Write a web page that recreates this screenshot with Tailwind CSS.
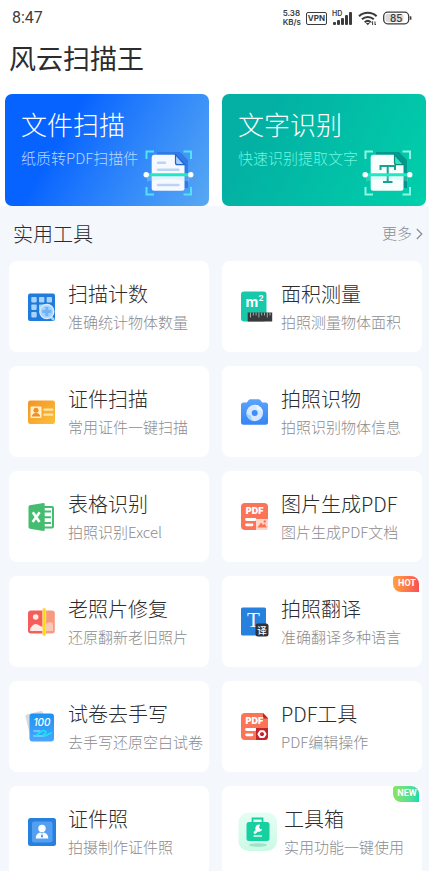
<!DOCTYPE html>
<html lang="zh-CN">
<head>
    <meta charset="UTF-8">
    <meta name="viewport" content="width=device-width, initial-scale=1.0">
    <title>风云扫描王</title>
    <script src="https://cdn.jsdelivr.net/npm/@tailwindcss/browser@4"></script>
</head>
<body class="h-screen flex flex-col overflow-hidden bg-[#f4f7fb] text-[#2c2c2e] font-light font-['Noto_Sans_CJK_SC',sans-serif]">

<header class="bg-white">
    <!-- Status bar -->
    <div class="flex h-9 items-center justify-between pl-3 pr-[17px] text-[#3c3c3c]">
        <span class="font-['Roboto',sans-serif] text-base font-normal">8:47</span>
        <div class="flex items-center gap-[5px]">
            <div class="font-['Inter',sans-serif] text-[8px] leading-[9px] font-semibold">
                <div>5.38</div>
                <div>KB/s</div>
            </div>
            <span class="flex h-[13px] w-[21px] items-center justify-center rounded-[2px] border border-[#3c3c3c] font-['Inter',sans-serif] text-[8px] font-bold">VPN</span>
            <svg class="h-4 w-[21px]" viewBox="0 0 21 16" fill="#3c3c3c">
                <text x="0" y="6" font-family="Inter, sans-serif" font-size="7" font-weight="600">HD</text>
                <rect x="1" y="12" width="3" height="3" rx="1"/>
                <rect x="5" y="10" width="3" height="5" rx="1"/>
                <rect x="9" y="8" width="3" height="7" rx="1"/>
                <rect x="13" y="5" width="3" height="10" rx="1"/>
                <rect x="17" y="2" width="3" height="13" rx="1"/>
            </svg>
            <svg class="h-4 w-5" viewBox="0 0 20 16" fill="none" stroke="#3c3c3c" stroke-width="2.1">
                <path d="M1 6.200c5-4.600 12.600-4.600 17.600 0M3.900 9.300c3.500-3.100 8.400-3.100 11.900 0M6.700 12.200c2-1.700 4.300-1.700 6 0"/>
                <path d="M7.800 13l2 2.200 2-2.200z" fill="#3c3c3c" stroke="none"/>
                <path d="M14.600 15v-3.500l-1 1M17 11.500v3.500l1-1" stroke-width="1"/>
            </svg>
            <svg class="h-4 w-[29px]" viewBox="0 0 29 16">
                <rect x="0.700" y="2.200" width="25" height="11.600" rx="4" fill="#fff" stroke="#3c3c3c" stroke-width="1.300"/>
                <rect x="2.500" y="4" width="18" height="8" rx="2" fill="#dadada"/>
                <path d="M27.600 6.300v3.400" stroke="#3c3c3c" stroke-width="1.600"/>
                <text x="13.200" y="11.600" text-anchor="middle" font-family="Inter, sans-serif" font-size="10" font-weight="500" fill="#3c3c3c">85</text>
            </svg>
        </div>
    </div>

    <h1 class="flex h-11 items-center pl-[9px] text-[27px] font-normal">风云扫描王</h1>

    <!-- Main banners -->
    <nav class="grid grid-cols-2 gap-[13px] pt-3.5 pl-[5px] pr-[3px]">
        <a href="#" class="relative h-28 rounded-[7px] bg-linear-120 from-[#0763ff] from-30% to-[#58a8f2] pt-3 pl-4 text-white">
            <h2 class="text-[26px] leading-9">文件扫描</h2>
            <p class="mt-1 text-[15px] leading-6 whitespace-nowrap text-[#b9d8ff]">纸质转PDF扫描件</p>
            <svg class="absolute right-3.5 bottom-1.5 size-13" viewBox="0 0 52 52" fill="none">
                <path d="M14 4h23l8 8v28H14z" fill="#2f7ae6"/>
                <path d="M11 6.700h21.500l9 10v23.500q0 2.500-2.500 2.500H11.200q-2.500 0-2.500-2.500v-31q0-2.500 2.300-2.500z" fill="#f6faff"/>
                <path d="M32.500 6.700l9 10h-7q-2 0-2-2z" fill="#a9cdfa" stroke="#1e63d0" stroke-width="1.200"/>
                <path d="M15 14.700h7M15 21.700h20.500M15 37h20.500" stroke="#bcd3f8" stroke-width="2.400" stroke-linecap="round"/>
                <path d="M4 27.500h42v6q-21-5-42 0z" fill="#b9e2ff" opacity=".3"/>
                <path d="M3.500 11V3.500H11M40.500 3.500H48V11M3.500 39v7.500H11M40.500 46.500H48V39" stroke="#4fe3f5" stroke-width="2"/>
                <path d="M4 26.700h43" stroke="#20e8c5" stroke-width="3"/>
                <circle cx="3.200" cy="26.700" r="2.700" fill="#fff"/>
                <circle cx="47.800" cy="26.700" r="2.700" fill="#fff"/>
            </svg>
        </a>
        <a href="#" class="relative h-28 rounded-[7px] bg-linear-120 from-[#03b0a3] from-20% to-[#01d0ab] pt-3 pl-4 text-white">
            <h2 class="text-[26px] leading-9">文字识别</h2>
            <p class="mt-1 text-[15px] leading-6 whitespace-nowrap text-[#6df5de]">快速识别提取文字</p>
            <svg class="absolute right-3 bottom-1.5 size-13" viewBox="0 0 52 52" fill="none">
                <path d="M14 4h23l8 8v28H14z" fill="#02998c"/>
                <path d="M11 6.700h21.500l9 10v23.500q0 2.500-2.500 2.500H11.200q-2.500 0-2.500-2.500v-31q0-2.500 2.300-2.500z" fill="#f6fffd"/>
                <path d="M32.500 6.700l9 10h-7q-2 0-2-2z" fill="#35dfc2" stroke="#078d80" stroke-width="1.200"/>
                <path d="M18.500 22v-4H33v4M25.700 18v16M21 34h9.500" stroke="#16a193" stroke-width="2"/>
                <path d="M4 27.500h42v6q-21-5-42 0z" fill="#9cf8e4" opacity=".25"/>
                <path d="M3.500 11V3.500H11M40.500 3.500H48V11M3.500 39v7.500H11M40.500 46.500H48V39" stroke="#8df8e3" stroke-width="2"/>
                <path d="M4 26.700h43" stroke="#20e8c5" stroke-width="3"/>
                <circle cx="3.200" cy="26.700" r="2.700" fill="#fff"/>
                <circle cx="47.800" cy="26.700" r="2.700" fill="#fff"/>
            </svg>
        </a>
    </nav>
</header>

<main class="min-h-0 flex-1 overflow-hidden">
    <div class="flex h-[55px] items-center justify-between pl-[13px] pr-1.5">
        <h2 class="text-xl">实用工具</h2>
        <a href="#" class="flex items-center gap-1 text-[15px] text-[#8c8c8f]">更多
            <svg class="h-3 w-[7px]" viewBox="0 0 7 12" fill="none" stroke="#8c8c8f" stroke-width="1.200"><path d="M.8 1l5 5-5 5"/></svg>
        </a>
    </div>

    <!-- Tool cards -->
    <div class="grid auto-rows-[91px] grid-cols-2 gap-x-[13px] gap-y-3.5 pl-[9px] pr-[7px] whitespace-nowrap">

        <a href="#" class="flex items-center gap-[11px] rounded-lg bg-white pl-4">
            <svg class="size-8 shrink-0" viewBox="0 0 32 32">
                <rect x="3" y="2.500" width="27" height="27.500" rx="2" fill="#1f7bdc"/>
                <g fill="#a9d3fc">
                    <rect x="6.300" y="6" width="5.400" height="5.400" rx=".8"/><rect x="14" y="6" width="5.400" height="5.400" rx=".8"/><rect x="21.600" y="6" width="5.400" height="5.400" rx=".8"/>
                    <rect x="6.300" y="13.500" width="5.400" height="5.400" rx=".8"/><rect x="14" y="13.500" width="5.400" height="5.400" rx=".8"/>
                    <rect x="6.300" y="21" width="5.400" height="5.400" rx=".8"/>
                </g>
                <path d="M26 26l3 3" stroke="#a9d3fc" stroke-width="2.500"/>
                <circle cx="21.800" cy="20.500" r="7" fill="#a5d2fc" stroke="#d8ecff" stroke-width="1.400"/>
                <path d="M21.800 16v9M17.300 20.500h9" stroke="#6fb3f6" stroke-width="3"/>
            </svg>
            <div class="pt-0.5">
                <h3 class="text-xl leading-7">扫描计数</h3>
                <p class="text-[15px] leading-7 text-[#8c8c8f]">准确统计物体数量</p>
            </div>
        </a>

        <a href="#" class="flex items-center gap-[11px] rounded-lg bg-white pl-4">
            <svg class="size-8 shrink-0 overflow-visible" viewBox="0 0 32 32">
                <rect x="3" y="0.500" width="25.500" height="30" rx="3" fill="#18c8aa"/>
                <text x="7.500" y="15.500" font-family="Inter, sans-serif" font-size="14" font-weight="700" fill="#fff">m</text>
                <text x="20.500" y="10" font-family="Inter, sans-serif" font-size="8" font-weight="700" fill="#fff">2</text>
                <rect x="9.700" y="21.500" width="24.500" height="9" fill="#373a3c"/>
                <path d="M12.500 21.500v5M15.300 21.500v3M18.100 21.500v3M20.900 21.500v5M23.700 21.500v3M26.500 21.500v3M29.300 21.500v5M32 21.500v3" stroke="#a7a7a7"/>
            </svg>
            <div class="pt-0.5">
                <h3 class="text-xl leading-7">面积测量</h3>
                <p class="text-[15px] leading-7 text-[#8c8c8f]">拍照测量物体面积</p>
            </div>
        </a>

        <a href="#" class="flex items-center gap-[11px] rounded-lg bg-white pl-4">
            <svg class="size-8 shrink-0" viewBox="0 0 32 32">
                <defs><linearGradient id="idCard" x2="1" y2="1"><stop stop-color="#f39425"/><stop offset="1" stop-color="#fbbf3c"/></linearGradient></defs>
                <rect x="3" y="4.500" width="27" height="23.500" rx="2.200" fill="url(#idCard)"/>
                <rect x="5.500" y="10.500" width="11" height="11.500" rx="1" fill="#fff0cf"/>
                <circle cx="11" cy="14.300" r="2.500" fill="#ef8f21"/>
                <path d="M6.800 20.500q.5-3.500 4.200-3.500t4.200 3.500z" fill="#ef8f21"/>
                <path d="M19.300 13.700h8M19.300 18.700h8" stroke="#ffe4a8" stroke-width="2.200" stroke-linecap="round"/>
            </svg>
            <div class="pt-0.5">
                <h3 class="text-xl leading-7">证件扫描</h3>
                <p class="text-[15px] leading-7 text-[#8c8c8f]">常用证件一键扫描</p>
            </div>
        </a>

        <a href="#" class="flex items-center gap-[11px] rounded-lg bg-white pl-4">
            <svg class="size-8 shrink-0" viewBox="0 0 32 32">
                <defs><linearGradient id="camera" x2="0" y2="1"><stop stop-color="#5aa4fa"/><stop offset="1" stop-color="#3586f5"/></linearGradient></defs>
                <path d="M5.500 6.500h3.300l1.700-2.300q.7-.9 2-.9h8q1.300 0 2 .9l1.700 2.300h3.300q2.500 0 2.500 2.500v17.200q0 2.500-2.500 2.500h-22Q3 28.700 3 26.200V9q0-2.500 2.500-2.500z" fill="url(#camera)"/>
                <circle cx="16.700" cy="17" r="8.300" fill="#d5e8ff"/>
                <path d="M8.400 17a8.300 8.300 0 0 0 8.300 8.300q-4-1-3.700-6-2 .5-4.600-2.300z" fill="#a9cffd"/>
                <path d="M16.700 8.700a8.300 8.300 0 0 1 8.300 8.300q-1.500-4-6-3.500.5-2.800-2.300-4.800z" fill="#edf6ff"/>
                <circle cx="16.700" cy="17" r="3" fill="#3f8ef6"/>
            </svg>
            <div class="pt-0.5">
                <h3 class="text-xl leading-7">拍照识物</h3>
                <p class="text-[15px] leading-7 text-[#8c8c8f]">拍照识别物体信息</p>
            </div>
        </a>

        <a href="#" class="flex items-center gap-[11px] rounded-lg bg-white pl-4">
            <svg class="size-8 shrink-0" viewBox="0 0 32 32" fill="none">
                <rect x="17" y="6" width="11" height="20.500" rx="1" fill="#fff" stroke="#45bd70" stroke-width="2"/>
                <path d="M19 10.500h7M19 16.200h7M19 22h7" stroke="#45bd70" stroke-width="2"/>
                <path d="M4.800 4.300L18.500 2q1.200-.1 1.200 1v26q0 1.100-1.200 1L4.800 27.700q-1.300-.3-1.300-1.600V5.900q0-1.300 1.300-1.600z" fill="#45bd70"/>
                <path d="M7.800 11.300l6.700 9.700M14.700 11.300L7.600 21" stroke="#fff" stroke-width="2.600"/>
            </svg>
            <div class="pt-0.5">
                <h3 class="text-xl leading-7">表格识别</h3>
                <p class="text-[15px] leading-7 text-[#8c8c8f]">拍照识别Excel</p>
            </div>
        </a>

        <a href="#" class="flex items-center gap-[11px] rounded-lg bg-white pl-4">
            <svg class="size-8 shrink-0" viewBox="0 0 32 32">
                <rect x="3" y="2" width="27" height="27" rx="4" fill="#fb7458"/>
                <text x="16.600" y="13" text-anchor="middle" font-family="Inter, sans-serif" font-size="9" font-weight="900" fill="#fff">PDF</text>
                <path d="M8.500 18.500h8.500M8.500 23.800h5.500" stroke="#fff" stroke-width="2.800" stroke-linecap="round"/>
                <path d="M18 18h12v8q0 3-3 3h-9z" fill="#ffd5c9"/>
                <path d="M19.500 26.500l3.500-5 2 2.500 1.500-1.500 2.500 4z" fill="#fb7458"/>
                <circle cx="26.800" cy="20.500" r="1.200" fill="#fb7458"/>
            </svg>
            <div class="pt-0.5">
                <h3 class="text-xl leading-7">图片生成PDF</h3>
                <p class="text-[15px] leading-7 text-[#8c8c8f]">图片生成PDF文档</p>
            </div>
        </a>

        <a href="#" class="flex items-center gap-[11px] rounded-lg bg-white pl-4">
            <svg class="size-8 shrink-0" viewBox="0 0 32 32">
                <rect x="17" y="4.500" width="12.800" height="23" rx="3" fill="#f79a80"/>
                <path d="M6 4.500h12.500v23H6q-3 0-3-3v-17q0-3 3-3z" fill="#f45d5a"/>
                <circle cx="10.700" cy="11" r="2.800" fill="#ffe9e6"/>
                <path d="M5 24.500q0-3 3-5.500 3-2.300 6.500.5 2 1.600 4 1.200v4.300H6q-1 0-1-.5z" fill="#ffe9e6"/>
                <path d="M20.500 18.500q4-4 7.500-1v7.500h-7.500z" fill="#fcc7b8"/>
                <rect x="17.200" y="2" width="4" height="28" rx="2" fill="#ffd98a"/>
                <rect x="18.200" y="2.500" width="2" height="27" rx="1" fill="#f8dc12"/>
            </svg>
            <div class="pt-0.5">
                <h3 class="text-xl leading-7">老照片修复</h3>
                <p class="text-[15px] leading-7 text-[#8c8c8f]">还原翻新老旧照片</p>
            </div>
        </a>

        <a href="#" class="relative flex items-center gap-[11px] rounded-lg bg-white pl-4">
            <svg class="size-8 shrink-0" viewBox="0 0 32 32">
                <rect x="3" y="1.500" width="25" height="28" rx="1.500" fill="#2580de"/>
                <text x="15.500" y="21" text-anchor="middle" font-family="Liberation Serif, serif" font-size="21" font-weight="400" fill="#fff">T</text>
                <rect x="17.500" y="17.500" width="13" height="13" rx="2.500" fill="#303236"/>
                <text x="24" y="27.500" text-anchor="middle" font-family="Noto Sans CJK SC, sans-serif" font-size="9.500" font-weight="500" fill="#fff">译</text>
            </svg>
            <div class="pt-0.5">
                <h3 class="text-xl leading-7">拍照翻译</h3>
                <p class="text-[15px] leading-7 text-[#8c8c8f]">准确翻译多种语言</p>
            </div>
            <span class="absolute top-0 right-[3px] flex h-4 w-[26px] items-center justify-center rounded-tl-[3px] rounded-tr-lg rounded-bl-lg bg-linear-to-r from-[#ffa13d] to-[#fb4d52] pl-[2px] font-['Roboto',sans-serif] text-[9px] font-bold text-white">HOT</span>
        </a>

        <a href="#" class="flex items-center gap-[11px] rounded-lg bg-white pl-4">
            <svg class="size-8 shrink-0" viewBox="0 0 32 32" fill="none">
                <defs><linearGradient id="paper" x2="0" y2="1"><stop stop-color="#1a93f5"/><stop offset="1" stop-color="#4ba5fb"/></linearGradient></defs>
                <rect x="2.500" y="1.500" width="18" height="24" rx="2.500" fill="#d9dade" transform="rotate(-14 11 13)"/>
                <rect x="4.500" y="2.500" width="24.500" height="28" rx="3" fill="url(#paper)"/>
                <text x="17" y="14.500" text-anchor="middle" font-family="Inter, sans-serif" font-size="10" font-style="italic" font-weight="500" fill="#fff">100</text>
                <path d="M8.300 20h7M8.300 25h11" stroke="#8bd0ff" stroke-width="1.500"/>
                <path d="M11.500 24.500q6-6 8.500-4.500 2 1.500-1 3.500-1.800 1.700.5 1.500 2-.5 6.500-3" stroke="#16e4f2" stroke-width="1.800" stroke-linecap="round"/>
            </svg>
            <div class="pt-0.5">
                <h3 class="text-xl leading-7">试卷去手写</h3>
                <p class="text-[15px] leading-7 text-[#8c8c8f]">去手写还原空白试卷</p>
            </div>
        </a>

        <a href="#" class="flex items-center gap-[11px] rounded-lg bg-white pl-4">
            <svg class="size-8 shrink-0" viewBox="0 0 32 32" fill="none">
                <path d="M7 2h18l5 5v18q0 4-4 4H7q-4 0-4-4V6q0-4 4-4z" fill="#fb7458"/>
                <path d="M25 2l5 5.500h-3.500Q25 7.500 25 6z" fill="#b3272c"/>
                <text x="16.400" y="13" text-anchor="middle" font-family="Inter, sans-serif" font-size="9" font-weight="900" fill="#fff">PDF</text>
                <path d="M8.500 18.500H17M8.500 23.800h5.500" stroke="#fff" stroke-width="2.800" stroke-linecap="round"/>
                <path d="M18 17h12v8.500q0 3.500-3.500 3.500H18z" fill="#c3232b"/>
                <path d="M22.300 20.200h3.400l1.800 2.900-1.800 2.900h-3.400l-1.800-2.900z" stroke="#fff" stroke-width="2" stroke-linejoin="round"/>
            </svg>
            <div class="pt-0.5">
                <h3 class="text-xl leading-7">PDF工具</h3>
                <p class="text-[15px] leading-7 text-[#8c8c8f]">PDF编辑操作</p>
            </div>
        </a>

        <a href="#" class="flex items-center gap-[11px] rounded-lg bg-white pl-4">
            <svg class="size-8 shrink-0" viewBox="0 0 32 32">
                <rect x="3" y="2" width="28" height="28" rx="2.500" fill="#2680e0"/>
                <rect x="7" y="5.500" width="20.500" height="21" rx="2" fill="#559ff2"/>
                <circle cx="17" cy="12.500" r="3.700" fill="#fff"/>
                <path d="M10.700 22.500q.3-5.500 5-6l1.300 1 1.300-1q4.700.5 5 6z" fill="#fff"/>
                <path d="M17 17.500l1 3-1 1.300-1-1.300z" fill="#2680e0"/>
            </svg>
            <div class="pt-0.5">
                <h3 class="text-xl leading-7">证件照</h3>
                <p class="text-[15px] leading-7 text-[#8c8c8f]">拍摄制作证件照</p>
            </div>
        </a>

        <a href="#" class="relative flex items-center gap-1.5 rounded-lg bg-white pl-4">
            <svg class="size-10 shrink-0" viewBox="0 0 40 40" fill="none">
                <defs><linearGradient id="toolbox" x2="0" y2="1"><stop stop-color="#e6fdf3"/><stop offset="1" stop-color="#cbfae6"/></linearGradient></defs>
                <rect x="0.500" y="0.500" width="38.500" height="38.500" rx="10" fill="url(#toolbox)"/>
                <ellipse cx="20" cy="33" rx="9" ry="1.800" fill="#9de3c8"/>
                <path d="M14.500 11V6.500h10V11" stroke="#14cf9f" stroke-width="1.800"/>
                <rect x="8.500" y="10" width="23" height="19" rx="2.500" fill="#16d0a0"/>
                <path d="M17 20.500l3.500-3.500" stroke="#fff" stroke-width="2.600" stroke-linecap="round"/>
                <path d="M22 12.800a3.500 3.500 0 1 0 2.300 4.200l-2.300.2-1-1.400z" fill="#fff"/>
                <path d="M15.500 24h8.500" stroke="#fff" stroke-width="1.300"/>
            </svg>
            <div class="pt-0.5">
                <h3 class="text-xl leading-7">工具箱</h3>
                <p class="text-[15px] leading-7 text-[#8c8c8f]">实用功能一键使用</p>
            </div>
            <span class="absolute top-0 right-[3px] flex h-4 w-[26px] items-center justify-center rounded-tl-[3px] rounded-tr-lg rounded-bl-lg bg-linear-to-r from-[#8be35e] to-[#0bdcae] pl-[2px] font-['Roboto',sans-serif] text-[9px] font-bold text-white">NEW</span>
        </a>
    </div>
</main>

</body>
</html>
